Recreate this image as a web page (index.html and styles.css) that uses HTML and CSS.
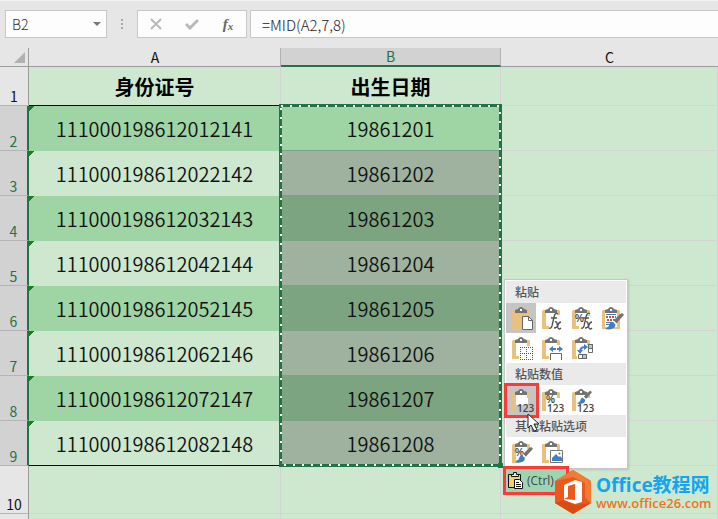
FILE: index.html
```html
<!DOCTYPE html>
<html lang="zh-CN">
<head>
<meta charset="utf-8">
<title>Excel</title>
<link rel="stylesheet" href="styles.css">
</head>
<body>
<svg class="defs" aria-hidden="true">
  <symbol id="board" viewBox="0 0 30 30">
    <path fill="#fff" d="M9 9h13v15H9z"/>
    <path fill="#e9c17f" d="M6 8l1-1h3v16h3v3H6zM20 7h3l1 1v5h-3V9h-1z"/>
    <path fill="#737373" d="M9 10V7l3-1q1-2 3-2t3 2l3 1v3z"/>
    <path fill="#fff" d="M14 6h2v2h-2z"/>
  </symbol>
  <symbol id="brush" viewBox="0 0 20 20">
    <path fill="#737373" d="M18 1l2 2-8 9-3-3 7-7z"/>
    <path fill="#fff" d="M9 9l3 3-1 1-3-3z"/>
    <path fill="#3f7fc1" d="M7 10l4 3q0 4-4 5-3 1-7 0l4-3q1-4 3-5z"/>
  </symbol>
</svg>

<header class="formula-row">
  <div class="name-box">
    <input class="name-input" aria-label="名称框" value="B2">
    <button class="name-drop" aria-label="展开名称框"><svg width="8" height="4"><path fill="#777" d="M0 0h8L4 4z"/></svg></button>
  </div>
  <div class="grip"><i></i><i></i><i></i></div>
  <div class="fx-box">
    <button aria-label="取消"><svg width="12" height="12"><path fill="none" stroke="#b9b9b9" stroke-width="2" d="M1 1l10 10M11 1L1 11"/></svg></button>
    <button aria-label="输入"><svg width="14" height="12"><path fill="none" stroke="#b9b9b9" stroke-width="3" d="M1 6l4 4 8-8"/></svg></button>
    <button class="fx" aria-label="插入函数">f<sub>x</sub></button>
  </div>
  <input class="formula" aria-label="编辑栏" value="=MID(A2,7,8)">
</header>

<main class="sheet">
<table>
  <colgroup><col class="c-num"><col class="c-a"><col class="c-b"><col></colgroup>
  <thead>
    <tr><th class="corner"><svg width="11" height="11"><path fill="#b1b1b1" d="M11 0v11H0z"/></svg></th><th>A</th><th class="active">B</th><th>C</th></tr>
  </thead>
  <tbody>
    <tr class="title"><th>1</th><td>身份证号</td><td>出生日期</td><td></td></tr>
    <tr class="rec odd"><th>2</th><td>111000198612012141</td><td class="current">19861201</td><td></td></tr>
    <tr class="rec"><th>3</th><td>111000198612022142</td><td>19861202</td><td></td></tr>
    <tr class="rec odd"><th>4</th><td>111000198612032143</td><td>19861203</td><td></td></tr>
    <tr class="rec"><th>5</th><td>111000198612042144</td><td>19861204</td><td></td></tr>
    <tr class="rec odd"><th>6</th><td>111000198612052145</td><td>19861205</td><td></td></tr>
    <tr class="rec"><th>7</th><td>111000198612062146</td><td>19861206</td><td></td></tr>
    <tr class="rec odd"><th>8</th><td>111000198612072147</td><td>19861207</td><td></td></tr>
    <tr class="rec last"><th>9</th><td>111000198612082148</td><td>19861208</td><td></td></tr>
    <tr class="blank"><th>10</th><td></td><td></td><td></td></tr>
    <tr class="rest"><th></th><td></td><td></td><td></td></tr>
  </tbody>
</table>

<svg class="ants" width="225" height="366" aria-hidden="true">
  <rect x="1.500" y="1.500" width="220" height="360" fill="none" stroke="#217346" stroke-width="3"/>
  <rect x="2" y="2" width="219" height="359" fill="none" stroke="#fff" stroke-width="2" stroke-dasharray="2 7"/>
  <path fill="#217346" d="M219 359h5v5h-5z"/>
</svg>

<div class="paste-menu" role="menu">
  <h2>粘贴</h2>
  <div class="options">
    <button class="on" aria-label="粘贴"><svg viewBox="0 0 30 30"><path fill="#e9c17f" d="M6 8l1-1h16l1 1v18H6z"/><path fill="#737373" d="M9 10V7l3-1q1-2 3-2t3 2l3 1v3z"/><path fill="#fff" d="M14 6h2v2h-2z"/><path fill="#fff" stroke="#666" d="M16.500 13.500h6l4 4v9h-10z"/><path fill="none" stroke="#666" d="M22.500 13.500v4h4"/></svg></button>
    <button aria-label="公式"><svg viewBox="0 0 30 30"><use href="#board"/><path fill="#fff" d="M13 12h13v14H13z"/><path class="ink" d="M22 11q-3-2-4 3l-2 9q-1 3-3 2M15 15h6"/><path class="ink" d="M19 19q2-1 2 2l1 4q1 2 3 0M25 19q-2 0-3 3t-4 3"/></svg></button>
    <button aria-label="公式和数字格式"><svg viewBox="0 0 30 30"><use href="#board"/><path fill="#fff" d="M9 11h17v11H13v4h13V12z"/><text x="9" y="19" class="pct">%</text><path class="ink" d="M24 11q-3-2-4 3l-2 9q-1 3-3 2M17 15h6"/><path class="ink" d="M20 19q2-1 2 2l1 4q1 2 3 0M26 19q-2 0-3 3t-4 3"/></svg></button>
    <button aria-label="保留源格式"><svg viewBox="0 0 30 30"><path fill="#e9c17f" d="M6 8l1-1h16l1 1v18H6z"/><path fill="#fff" d="M9 9h12v15H9z"/><path fill="#737373" d="M9 10V7l3-1q1-2 3-2t3 2l3 1v3z"/><path fill="#fff" d="M14 6h2v2h-2z"/><path stroke="#3f7fc1" d="M10 11.500h10M10 19.500h8M10 21.500h5"/><path stroke="#d65532" stroke-width="2" stroke-dasharray="2 1" d="M10 14h10M11 17h9"/><use href="#brush" x="9" y="9" width="19" height="19"/></svg></button>
    <button aria-label="无边框"><svg viewBox="0 0 30 30"><use href="#board"/><path fill="#fff" d="M13 13h14v14H13z"/><path fill="none" stroke="#555" stroke-dasharray="1 1" d="M14 14.500h13M14 20.500h13M14 26.500h13M14.500 14v13M20.500 14v13M26.500 14v13"/></svg></button>
    <button aria-label="保留源列宽"><svg viewBox="0 0 30 30"><use href="#board"/><path fill="#fff" d="M13 12h14v15H13z"/><path fill="#3f7fc1" d="M13 16l4-3v2h3v2h-3v2zM27 16l-4-3v2h-2v2h2v2z"/><path fill="none" stroke="#666" d="M14.500 27v-6.500h11V27"/></svg></button>
    <button aria-label="转置"><svg viewBox="0 0 30 30"><use href="#board"/><path fill="#fff" d="M11 12h15v14H11z"/><path fill="none" stroke="#3f7fc1" stroke-width="2" d="M14 19q0-5 5-5"/><path fill="#3f7fc1" d="M11 17h6l-3 4zM18 11l4 3-4 3z"/><path fill="#fff" stroke="#666" d="M22.500 11.500h4v8h-4zM12.500 21.500h8v4h-8z"/><path fill="#a8c6e6" stroke="#666" d="M22.500 11.500h4v4h-4zM16.500 21.500h4v4h-4z"/></svg></button>
  </div>
  <h2>粘贴数值</h2>
  <div class="options">
    <button class="on" aria-label="值"><svg viewBox="0 0 30 30"><use href="#board"/><path fill="#c5c5c5" d="M10 19h18v8H10z"/><path fill="#fff" d="M10 17h11v3H10z"/><text x="11" y="27" class="num">123</text></svg></button>
    <button aria-label="值和数字格式"><svg viewBox="0 0 30 30"><use href="#board"/><path fill="#fff" d="M10 19h18v8H10z"/><text x="10" y="18" class="pct">%</text><text x="11" y="27" class="num">123</text></svg></button>
    <button aria-label="值和源格式"><svg viewBox="0 0 30 30"><use href="#board"/><path fill="#fff" d="M10 19h18v8H10z"/><use href="#brush" x="11" y="5" width="15" height="15"/><text x="11" y="27" class="num">123</text></svg></button>
  </div>
  <h2>其他粘贴选项</h2>
  <div class="options">
    <button aria-label="格式"><svg viewBox="0 0 30 30"><use href="#board"/><path fill="#fff" d="M13 12h11v14H13z"/><text x="9" y="19" class="pct">%</text><use href="#brush" x="9" y="9" width="18" height="18"/></svg></button>
    <button aria-label="图片"><svg viewBox="0 0 30 30"><use href="#board"/><path fill="#fff" stroke="#777" d="M14.500 13.500h12v12h-12z"/><path fill="#3f7fc1" d="M16 24v-3l4-4 3 3 1-1 2 2v3z"/><circle cx="23.500" cy="16.500" r="1" fill="#3f7fc1"/></svg></button>
  </div>
  <span class="mark"></span>
  <svg class="cursor" width="14" height="20" viewBox="0 0 14 20"><path fill="#fff" stroke="#222" d="M1 1v14l3-3 3 6 3-1-3-6h5z"/></svg>
</div>

<button class="smart-tag"><svg width="16" height="17" viewBox="0 0 16 17"><path fill="#f4cf72" stroke="#111" d="M.5 2.500h12v13H.5z"/><path fill="#eee" stroke="#111" d="M3.500 4.500v-2h2v-2h3v2h2v2z"/><path fill="#fff" stroke="#111" d="M6.500 7.500h5l3 3v6h-8z"/><path stroke="#111" d="M8 10.500h3M8 12.500h5M8 14.500h5"/></svg>(Ctrl)</button>

<a class="brand" href="#">
  <svg width="36" height="44" viewBox="0 0 36 44"><path fill="#ea5a1e" d="M18 0l18 11v22L18 44 0 33V11z"/><path fill="#f17a35" d="M18 0l18 11v22l-6-5V13L18 7 0 11z"/><path fill="#dc4a14" d="M0 33l8-3 12 5 16-2-18 11z"/><path fill="#fff" d="M9 15l11-5 7 2v20l-7 2-11-4v-1l11 1V14l-7 2v11l-4 2z"/></svg>
  <span><b>Office教程网</b><small>www.office26.com</small></span>
</a>
</main>
</body>
</html>
```
FILE: styles.css
```css
* { box-sizing: border-box; }
body {
  margin: 0;
  background: #e6e6e6;
  font-family: "Noto Sans CJK SC", sans-serif;
}
button, input { font: inherit; border: 0; padding: 0; background: none; }
.defs { position: absolute; width: 0; height: 0; }

.formula-row {
  display: flex;
  height: 48px;
  padding: 9px 0 10px 5px;
  border-top: 1px solid #f3f3f3;
}
.name-box, .fx-box, .formula { background: #fdfdfd; border: 1px solid #c6c6c6; }
.name-box { display: flex; width: 102px; align-items: center; }
.name-input {
  flex: 1;
  min-width: 0;
  padding-left: 6px;
  font-size: 14px;
  font-weight: 300;
  color: #333;
}
.name-drop { width: 18px; display: flex; justify-content: center; }
.grip {
  width: 30px;
  display: flex;
  flex-direction: column;
  align-items: center;
  justify-content: center;
  gap: 2px;
}
.grip i { width: 2px; height: 2px; background: #a9a9a9; }
.fx-box { display: flex; width: 110px; margin-right: 3px; align-items: center; }
.fx-box button { flex: 1; display: flex; justify-content: center; align-items: center; }
.fx-box .fx {
  font: italic bold 15px/20px "Liberation Serif", serif;
  color: #666;
}
.fx sub { font-size: 11px; line-height: 8px; padding-top: 4px; vertical-align: baseline; }
.formula {
  flex: 1;
  min-width: 0;
  border-right: 0;
  padding-left: 11px;
  font-size: 15px;
  font-weight: 300;
  color: #222;
}

.sheet { position: relative; }
table { width: 100%; table-layout: fixed; border-collapse: separate; border-spacing: 0; }
.c-num { width: 29px; }
.c-a { width: 252px; }
.c-b { width: 220px; }
th, td { padding: 0; text-align: center; }
th {
  font-size: 14px;
  font-weight: 400;
  line-height: 17px;
  color: #111;
  background: #e6e6e6;
}
thead th { height: 19px; border-bottom: 1px solid #9b9b9b; }
thead .active {
  background: #d2d2d2;
  color: #217346;
  border-bottom: 2px solid #217346;
  border-right: 1px solid #b1b1b1;
  box-shadow: -1px 0 #b1b1b1;
}
.corner { border-right: 1px solid #9b9b9b; }
.corner svg { display: block; margin: 0 3px 0 auto; }
tbody th {
  vertical-align: bottom;
  border-right: 1px solid #9b9b9b;
  border-bottom: 1px solid #b5b5b5;
}
td {
  background: #cde8cf;
  border-right: 1px solid #d3d3d3;
  border-bottom: 1px solid #d3d3d3;
  color: #111;
}
.title td { height: 39px; padding-top: 2px; font-size: 20px; line-height: 30px; font-weight: 700; color: #000; }
.title td:nth-child(2) { border-bottom-color: #000; }
.rec td { height: 45px; padding-top: 2px; font-size: 20px; line-height: 30px; font-weight: 350; }
.rec th { background: #d2d2d2; color: #217346; border-right: 2px solid #217346; }
.rec td:nth-child(2) {
  border-color: #cde8cf;
  background: linear-gradient(135deg, #0a8a0a 4px, transparent 4px), #cde8cf;
}
.rec.odd td:nth-child(2) {
  border-color: #9fd5a5;
  background: linear-gradient(135deg, #0a8a0a 4px, transparent 4px), #9fd5a5;
}
.rec td:nth-child(3) { background: #9eb29f; border-color: #7da480; }
.rec.odd td:nth-child(3) { background: #7da480; }
.rec.odd td.current { background: #9fd5a5; }
.rec.last td:nth-child(2) { border-bottom-color: #000; }
.blank td { height: 48px; }
.rest th, .rest td { height: 5px; border-bottom: 0; }

.ants { position: absolute; left: 279px; top: 56px; }

.paste-menu {
  position: absolute;
  left: 504px;
  top: 231px;
  width: 124px;
  padding: 1px;
  background: #fff;
  border: 1px solid #c6c6c6;
  box-shadow: 1px 1px 2px #b3c8b5;
}
.paste-menu h2 {
  margin: 0;
  padding-left: 9px;
  font-size: 12px;
  line-height: 22px;
  font-weight: 500;
  color: #555;
  background: #eaeaea;
}
.options { display: grid; grid-template-columns: repeat(4, 30px); }
.options button { height: 30px; }
.options svg { display: block; width: 30px; height: 30px; }
.options .on { background: #c5c5c5; }
.ink { fill: none; stroke: #505050; stroke-width: 1.3; }
.pct { font: bold 10px "Liberation Sans", sans-serif; fill: #444; }
.num { font: 600 10px "Open Sans", sans-serif; fill: #444; }
.mark {
  position: absolute;
  left: -1px;
  top: 103px;
  width: 35px;
  height: 35px;
  border: 3px solid #fb3b37;
}
.cursor { position: absolute; left: 22px; top: 133px; }

.smart-tag {
  position: absolute;
  left: 503px;
  top: 418px;
  width: 66px;
  height: 29px;
  display: flex;
  align-items: center;
  gap: 3px;
  padding-left: 2px;
  border: 3px solid #fb3b37;
  background: #9fd4b3;
  font: 12px "Open Sans", sans-serif;
  color: #444;
}
.brand {
  position: absolute;
  left: 555px;
  top: 422px;
  display: flex;
  align-items: center;
  gap: 5px;
  text-decoration: none;
}
.brand b, .brand small { display: block; white-space: nowrap; }
.brand b { font: bold 19px/22px "Open Sans", "Noto Sans CJK SC", sans-serif; color: #14a5ee; }
.brand small { font: 600 13px/14px "Open Sans", sans-serif; color: #ee7420; }
```
